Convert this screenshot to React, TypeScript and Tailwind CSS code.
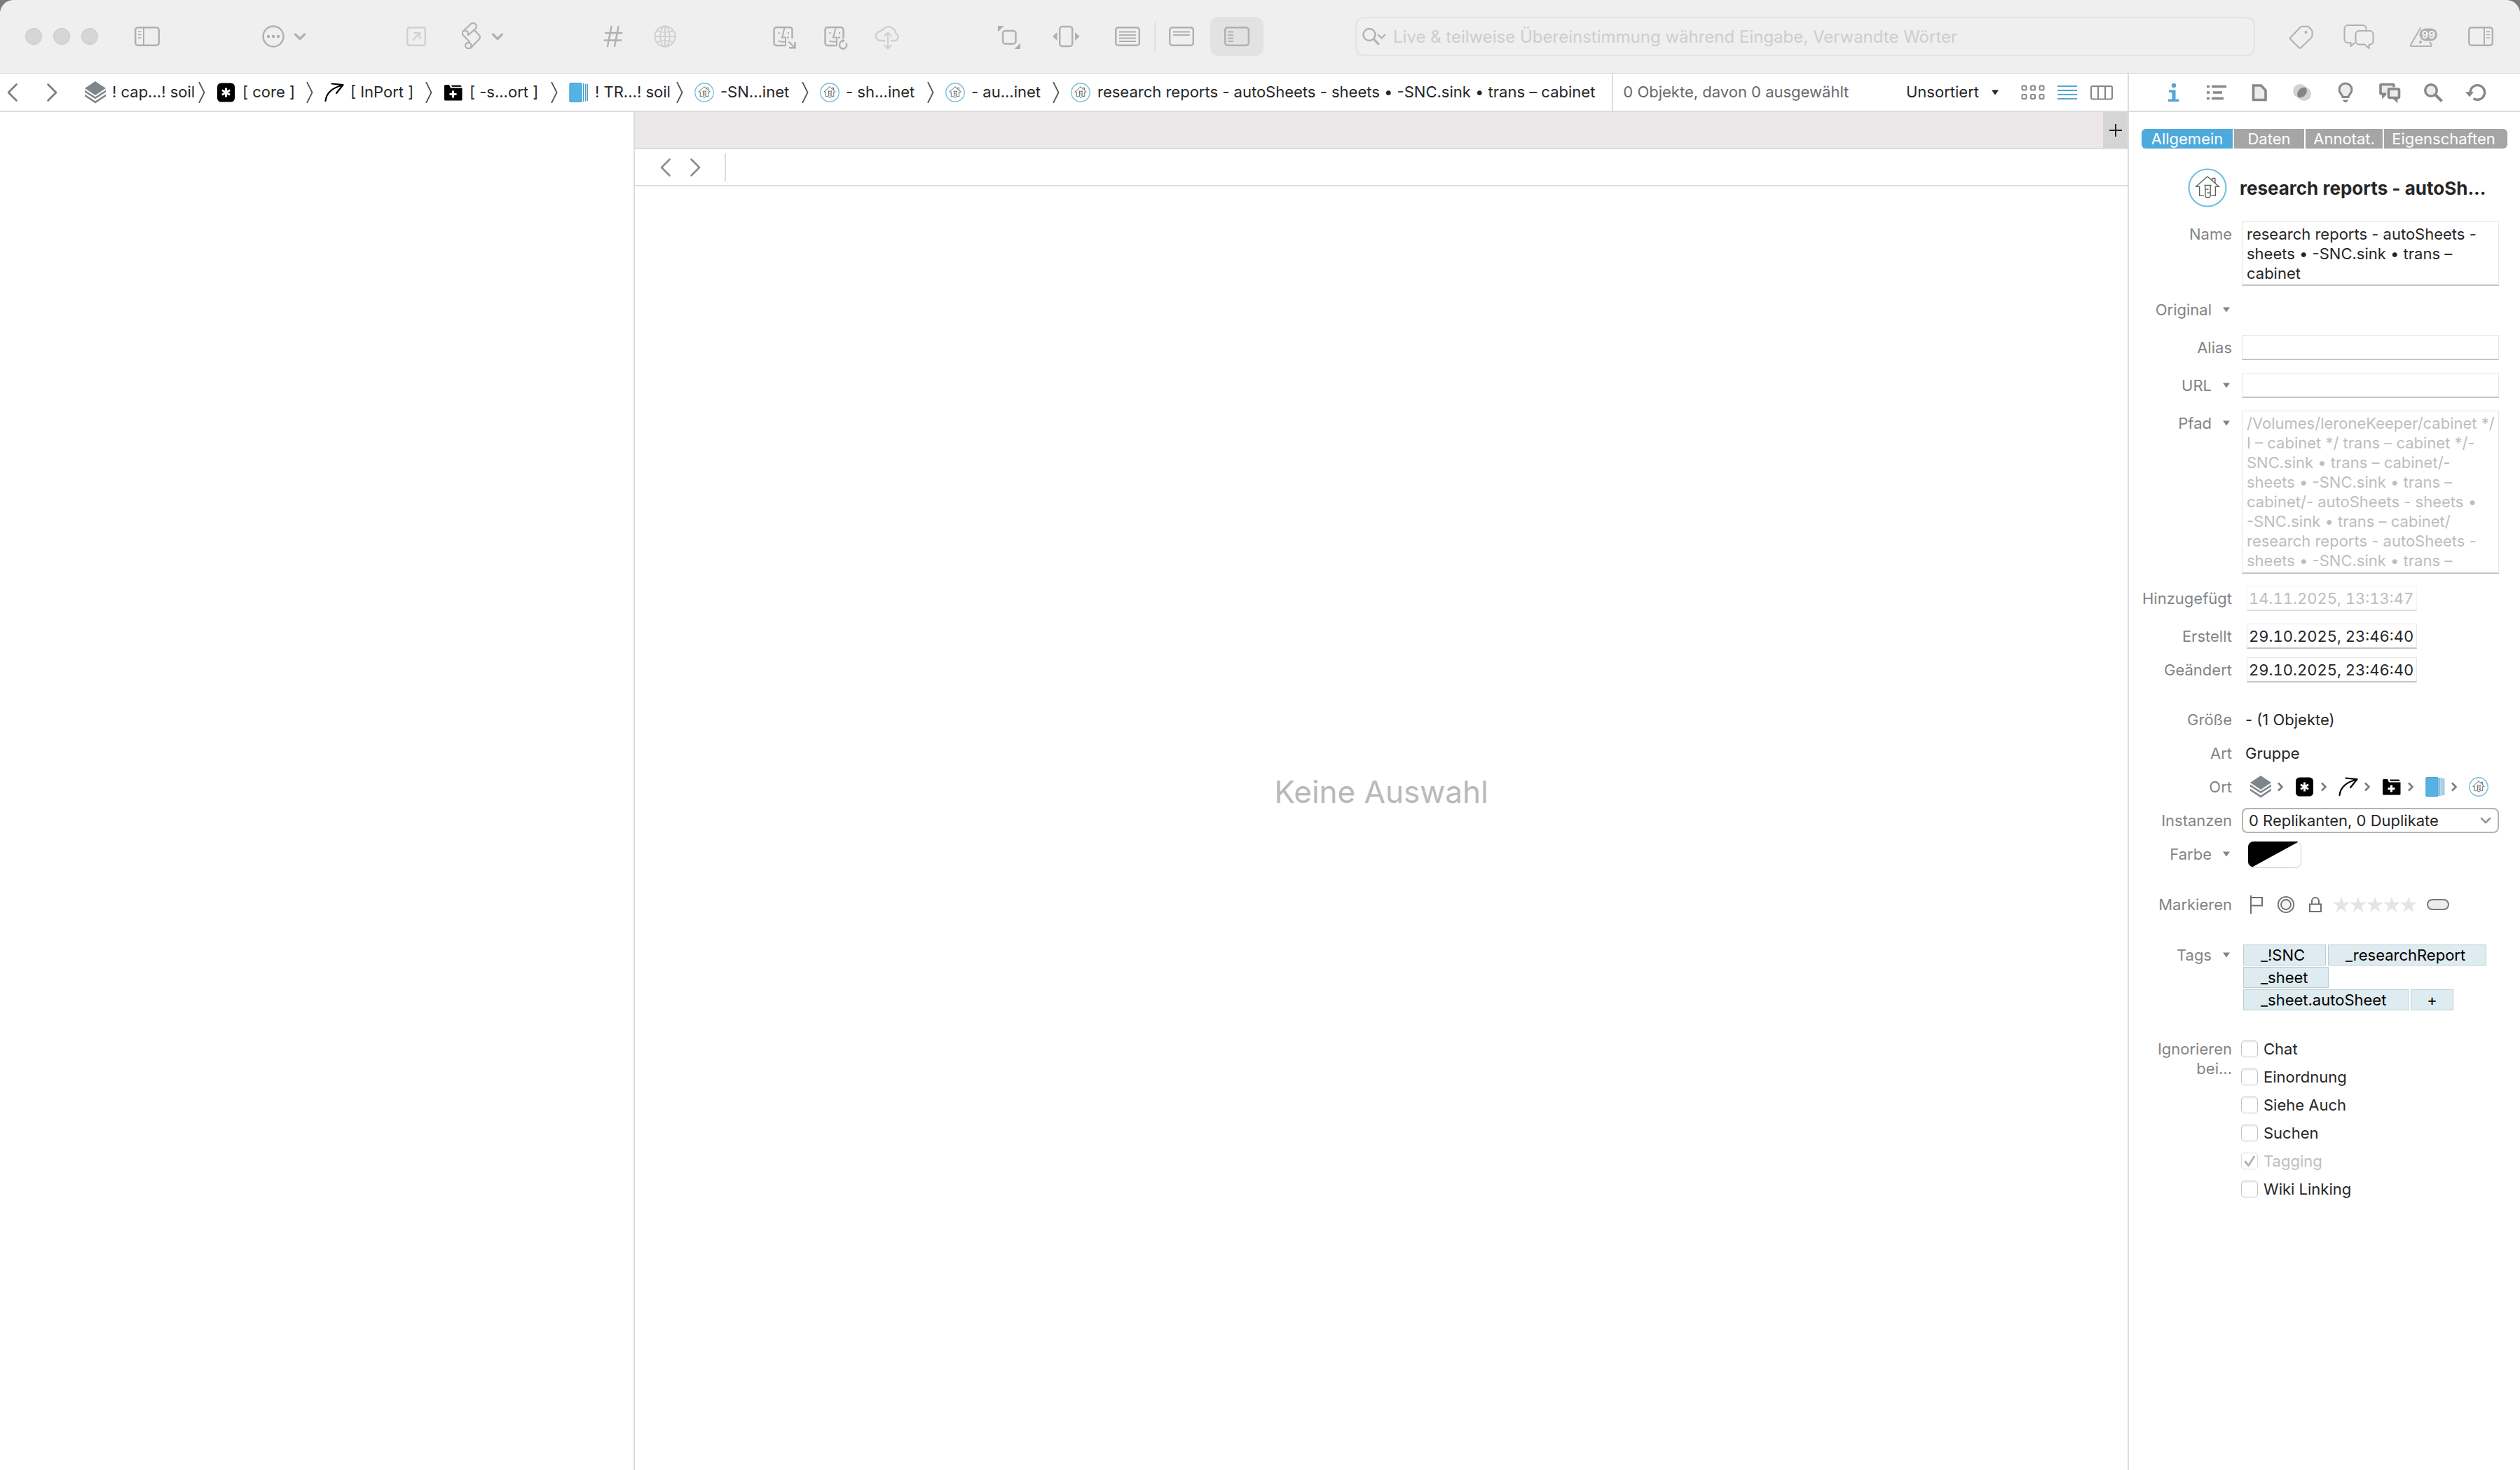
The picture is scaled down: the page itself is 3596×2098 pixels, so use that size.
import React from "react";

type IconProps = { className?: string };

/* ---------- Toolbar icons (40 x 40 grid) ---------- */

const toolSvg = "h-10 w-10 shrink-0 block";

function Tool({ children, className = "" }: { children: React.ReactNode; className?: string }) {
  return (
    <svg
      viewBox="0 0 40 40"
      className={`${toolSvg} ${className}`}
      fill="none"
      stroke="currentColor"
      strokeWidth="2.4"
      strokeLinecap="round"
      strokeLinejoin="round"
      aria-hidden="true"
    >
      {children}
    </svg>
  );
}

const SidebarLeftIcon = () => (
  <Tool>
    <rect x="3.2" y="7.2" width="33.6" height="25.6" rx="3.5" />
    <path d="M15 7.5v25" strokeWidth="2" />
    <path d="M7.5 13h3.5M7.5 17.500h3.500M7.500 22h3.500" strokeWidth="1.6" />
  </Tool>
);

const SidebarRightIcon = () => (
  <Tool>
    <rect x="3.2" y="7.2" width="33.6" height="25.6" rx="3.5" />
    <path d="M25 7.500v25" strokeWidth="2" />
    <path d="M28.500 13h4M28.500 17.500h4M28.500 22h4" strokeWidth="1.600" />
  </Tool>
);

const MoreIcon = () => (
  <Tool>
    <circle cx="20" cy="20" r="14.500" />
    <circle cx="13" cy="20" r="2.200" fill="currentColor" stroke="none" />
    <circle cx="20" cy="20" r="2.200" fill="currentColor" stroke="none" />
    <circle cx="27" cy="20" r="2.200" fill="currentColor" stroke="none" />
  </Tool>
);

const ExportIcon = () => (
  <Tool>
    <rect x="7.200" y="7.200" width="25.600" height="25.600" rx="3" />
    <path d="M15 25.500 25 15M16.500 15H25v8.500" strokeWidth="2.200" strokeLinecap="butt" strokeLinejoin="miter" />
  </Tool>
);

const ScriptIcon = () => (
  <Tool>
    <g strokeWidth="2.200">
      <path d="M9.200 12.300 19.500 2.500a4.600 4.600 0 0 1 7 0a4.600 4.600 0 0 1 0 6.500L15.700 18.300V15a3 3 0 0 0-3-3h-3" />
      <path d="M9.200 12.300a4.500 4.500 0 0 0 0 6.200L17.300 27v2.500" />
      <path d="m24.700 11 7 7a4.200 4.200 0 0 1 0 6L19.700 36.500" />
      <circle cx="16.300" cy="33" r="4.200" />
    </g>
  </Tool>
);

const HashIcon = () => (
  <Tool>
    <path d="M17.500 6 12 34M27.500 6 22 34M9 15h23.500M7.500 25.500H31" />
  </Tool>
);

const GlobeIcon = () => (
  <Tool>
    <g strokeWidth="1.900">
      <circle cx="20" cy="20" r="14.500" />
      <ellipse cx="20" cy="20" rx="6.800" ry="14.500" />
      <path d="M20 5.500v29M5.500 20h29M8.500 11.500c7 3.500 16 3.500 23 0M8.500 28.500c7-3.500 16-3.500 23 0" />
    </g>
  </Tool>
);

const FinderFace = () => (
  <g strokeLinecap="butt" strokeLinejoin="miter">
    <path d="M21 33H8a3.500 3.500 0 0 1-3.500-3.500v-19A3.500 3.500 0 0 1 8 7h19a3.500 3.500 0 0 1 3.500 3.500V23" />
    <path d="M19.500 8 16 21.500h5V33M26 21.500h-3M10.500 26.500c3 1 6 1.300 10 1.300" strokeWidth="2" />
    <path d="M11.500 14v2.500M25 14v2.500" strokeWidth="2" />
  </g>
);

const FinderOutIcon = () => (
  <Tool>
    <FinderFace />
    <path d="m25.500 27.500 8.500 8.500M34.500 28v8.200H26" strokeLinecap="butt" strokeLinejoin="miter" />
  </Tool>
);

const FinderSyncIcon = () => (
  <Tool>
    <FinderFace />
    <path d="M25.500 30.500a5 5 0 1 0 8.500-1M30 26a5 5 0 0 0-4.500 4.500" strokeWidth="2.200" strokeLinecap="butt" />
    <path d="m29 23.500 4 2.800-4 2.800z" fill="currentColor" stroke="none" />
  </Tool>
);

const CloudIcon = () => (
  <Tool>
    <path d="M15.500 26H10a6.500 6.500 0 0 1-1.200-13 6 6 0 0 1 4-2.500A10 10 0 0 1 31 15.500a5.500 5.500 0 0 1-.5 10.500H25" />
    <path d="M20 15v22M15 19.500l5-5 5 5M15 32.500l5 5 5-5" strokeWidth="2" />
  </Tool>
);

const ScaleIcon = () => (
  <Tool>
    <rect x="11" y="12" width="18.500" height="18.500" rx="3.500" />
    <path d="M4 5h8.500L4 13.500zM36 38h-8.500L36 29.500z" fill="currentColor" stroke="none" />
  </Tool>
);

const WidthIcon = () => (
  <Tool>
    <rect x="11.200" y="6" width="18" height="28" rx="3.500" />
    <path d="M7.500 14v12L1 20zM33 14v12l6.500-6z" fill="currentColor" stroke="none" />
  </Tool>
);

const ListBoxIcon = () => (
  <Tool>
    <rect x="3.200" y="7.200" width="33.600" height="25.600" rx="3.500" />
    <path d="M8 13.500h24M8 18h24M8 22.500h24M8 27h24" strokeWidth="2" strokeLinecap="butt" />
  </Tool>
);

const TopBoxIcon = () => (
  <Tool>
    <rect x="3.200" y="7.200" width="33.600" height="25.600" rx="3.500" />
    <path d="M8 13.500h24M8 18h24" strokeWidth="2" strokeLinecap="butt" />
  </Tool>
);

const SideBoxIcon = () => (
  <Tool>
    <rect x="3.200" y="7.200" width="33.600" height="25.600" rx="3.500" />
    <path d="M7.500 13.500H15M7.500 18H15M7.500 22.500H15M7.500 27H15" strokeWidth="2" strokeLinecap="butt" />
  </Tool>
);

const TagIcon = () => (
  <Tool>
    <path d="m4.500 21.500 14-14.500a4 4 0 0 1 2.500-1.300h7.500a3 3 0 0 1 2.200.8l4 4.500a3 3 0 0 1 .8 2.200V19a4 4 0 0 1-1.200 2.600L19.500 36a2 2 0 0 1-3 0l-12-12a1.800 1.800 0 0 1 0-2.500Z" strokeWidth="2" />
    <circle cx="26.500" cy="14" r="2" fill="currentColor" stroke="none" />
  </Tool>
);

const ChatsIcon = () => (
  <svg viewBox="0 0 44 40" className="block h-10 w-11 shrink-0" fill="none" stroke="currentColor" strokeWidth="2" strokeLinejoin="round" strokeLinecap="round" aria-hidden="true">
    <path d="M15.500 29.500 10.500 34v-5H6.500A5 5 0 0 1 1.500 24V9a5 5 0 0 1 5-5h21a5 5 0 0 1 5 5v1.500" />
    <path d="M22.500 12h15a5 5 0 0 1 5 5v9.500a5 5 0 0 1-5 5h-1V37l-6-5.500h-8a5 5 0 0 1-5-5V17a5 5 0 0 1 5-5Z" />
  </svg>
);

const AlertIcon = () => (
  <svg viewBox="0 0 42 40" className="block h-10 w-[42px] shrink-0" fill="none" stroke="currentColor" strokeWidth="2" strokeLinejoin="round" strokeLinecap="round" aria-hidden="true">
    <path d="m16 8-14 24a1.300 1.300 0 0 0 1 2h27.500a1.300 1.300 0 0 0 1-2l-2-4" />
    <circle cx="16" cy="28" r="2" fill="currentColor" stroke="none" />
    <rect x="13" y="7" width="28.500" height="21" rx="10.500" fill="#efefef" stroke="none" />
    <rect x="14.500" y="8.500" width="25.500" height="18" rx="9" fill="currentColor" stroke="none" />
    <text x="27.300" y="23" textAnchor="middle" fontSize="15" fontWeight="700" fill="#f4f4f4" stroke="none" fontFamily="Inter, sans-serif">
      99
    </text>
  </svg>
);

const ChevronDown = ({ className = "" }: IconProps) => (
  <svg viewBox="0 0 20 20" className={`block h-5 w-5 shrink-0 ${className}`} fill="none" stroke="currentColor" strokeWidth="3.200" strokeLinecap="round" strokeLinejoin="round" aria-hidden="true">
    <path d="m3.500 7 6.500 6.500L16.500 7" />
  </svg>
);

const NavChevron = ({ dir, className = "" }: { dir: "left" | "right"; className?: string }) => (
  <svg viewBox="0 0 20 30" className={`block h-[30px] w-5 shrink-0 ${className}`} fill="none" stroke="currentColor" strokeWidth="2.600" strokeLinecap="round" strokeLinejoin="round" aria-hidden="true">
    <path d={dir === "left" ? "M15.500 3.500 4 15l11.500 11.500" : "M4.500 3.500 16 15 4.500 26.500"} />
  </svg>
);

const Caret = ({ className = "" }: IconProps) => (
  <svg viewBox="0 0 10 8" className={`block h-2 w-2.5 shrink-0 ${className}`} fill="currentColor" aria-hidden="true">
    <path d="M0 .5h10L5 7.500z" />
  </svg>
);

/* ---------- Database item icons ---------- */

const LayersIcon = () => (
  <svg viewBox="0 0 30 32" className="block h-8 w-[30px] shrink-0" fill="#7f8689" aria-hidden="true">
    <path d="M15 0 30 10 15 20 0 10z" />
    <path d="M0 12.500 15 22.300 30 12.500v3L15 25.300 0 15.500z" />
    <path d="M0 18.500 15 28.300 30 18.500v3L15 31.500 0 21.500z" />
  </svg>
);

const CoreIcon = () => (
  <svg viewBox="0 0 28 28" className="block h-7 w-7 shrink-0" aria-hidden="true">
    <rect x="1" y="0.500" width="25" height="27" rx="5.500" fill="#000" />
    <path d="M13.500 7.500v13M7.900 10.750l11.200 6.500M19.100 10.750l-11.200 6.500" stroke="#fff" strokeWidth="2.800" />
  </svg>
);

const ArrowIcon = () => (
  <svg viewBox="0 0 28 28" className="block h-7 w-7 shrink-0" fill="none" stroke="#000" strokeWidth="2.200" strokeLinecap="round" strokeLinejoin="round" aria-hidden="true">
    <path d="M1.500 26C2.500 17 9 7.500 26.500 3.500M10.500 1.500 26.500 3.200 17 15" />
  </svg>
);

const FolderIcon = () => (
  <svg viewBox="0 0 28 28" className="block h-7 w-7 shrink-0" aria-hidden="true">
    <path d="M1 4.500A1.500 1.500 0 0 1 2.500 3H8l2 4.500h16.500V24a1.500 1.500 0 0 1-1.500 1.500H2.500A1.500 1.500 0 0 1 1 24z" fill="#000" />
    <path d="M11 3.500h13.500l1 2.500H12z" fill="#222" />
    <path d="M13.500 11.500v10M8.500 16.500h10" stroke="#fff" strokeWidth="3" />
  </svg>
);

const StackIcon = () => (
  <svg viewBox="0 0 28 28" className="block h-7 w-7 shrink-0" aria-hidden="true">
    <rect x="0.500" y="0" width="18" height="28" rx="2" fill="#57b2e4" />
    <rect x="0.800" y="0.300" width="17.400" height="27.400" rx="1.800" fill="none" stroke="#3f8fc0" strokeWidth="0.600" />
    <path d="M20.700 1v26M23.700 1.500v25M26.400 2v24" stroke="#4a9ccc" strokeWidth="1.400" />
  </svg>
);

const HouseIcon = ({ large = false }: { large?: boolean }) => (
  <svg viewBox="0 0 54 54" className={large ? "block h-14 w-14 shrink-0" : "block h-7 w-7 shrink-0"} fill="none" aria-hidden="true">
    <circle cx="27" cy="27" r="25.500" fill="#fdfefe" stroke="#6fbfde" strokeWidth={large ? 2 : 2.600} />
    <g stroke="#5c5c5c" strokeWidth={large ? 1.300 : 1.700} strokeLinejoin="round" strokeLinecap="round">
      <path d="M33.500 16.500V14h4v6.500" />
      <path d="M27 11.500 11 25.500h5V38h5.500M27 11.500l16 14h-5V38h-5.500" />
      <path d="M23 23.500h9M24 23.500v14.500a3.600 3.600 0 0 0 7 0V23.500M24 29h4M27 34h4" />
    </g>
  </svg>
);

/* ---------- Inspector tab icons (32 x 32 grid) ---------- */

function Insp({ children }: { children: React.ReactNode }) {
  return (
    <svg viewBox="0 0 32 32" className="block h-8 w-8" fill="none" stroke="currentColor" aria-hidden="true">
      {children}
    </svg>
  );
}

const inspectorTabs: { name: string; icon: React.ReactNode; active?: boolean }[] = [
  {
    name: "Info",
    active: true,
    icon: (
      <Insp>
        <circle cx="17" cy="6" r="3.200" fill="currentColor" stroke="none" />
        <path d="M10 12.500h9.500v13H24V29H9v-3.500h5.500V16H10z" fill="currentColor" stroke="none" />
      </Insp>
    ),
  },
  {
    name: "Inhalt",
    icon: (
      <Insp>
        <path d="M2 7.500h4M2 16h4M2 24.500h4M9 7.500h21M11 16h13M9 24.500h17" strokeWidth="3.500" />
      </Insp>
    ),
  },
  {
    name: "Dokument",
    icon: (
      <Insp>
        <path d="M7.500 6h11l6.500 7v13.500H7.500z" strokeWidth="3.600" fill="#ececec" />
      </Insp>
    ),
  },
  {
    name: "Schnittmenge",
    icon: (
      <Insp>
        <circle cx="12" cy="14" r="10" fill="#d2d2d2" stroke="none" />
        <circle cx="18" cy="18" r="10" fill="#d2d2d2" stroke="none" />
        <path d="M20.700 9A10 10 0 0 1 9.300 23 10 10 0 0 1 20.700 9Z" fill="#858585" stroke="none" />
      </Insp>
    ),
  },
  {
    name: "Siehe auch",
    icon: (
      <Insp>
        <path d="M11 22.500c0-3.500-5-5-5-10.500a9 9 0 0 1 18 0c0 5.500-5 7-5 10.500z" strokeWidth="3" fill="#ececec" />
        <path d="M10.500 26.500h9L16.500 30h-3z" fill="currentColor" stroke="none" />
      </Insp>
    ),
  },
  {
    name: "Chat",
    icon: (
      <Insp>
        <path d="M3 6h17v12H3z" fill="#ececec" stroke="none" />
        <path d="M22 8.500V6a1.500 1.500 0 0 0-1.500-1.500h-16A1.500 1.500 0 0 0 3 6v10.500A1.500 1.500 0 0 0 4.500 18H11" strokeWidth="3.600" />
        <path d="M5 18v7.500l6.500-6.500V18z" fill="currentColor" stroke="none" />
        <rect x="14.500" y="11" width="15" height="12.500" rx="1.500" strokeWidth="3.600" fill="#ececec" />
        <path d="M20 24.500h7.500V31z" fill="currentColor" stroke="none" />
      </Insp>
    ),
  },
  {
    name: "Suchen",
    icon: (
      <Insp>
        <circle cx="14" cy="13" r="8.300" strokeWidth="3.400" fill="#ececec" />
        <path d="m20.500 19.500 9 9" strokeWidth="4" />
      </Insp>
    ),
  },
  {
    name: "Versionen",
    icon: (
      <Insp>
        <path d="M8 15.500a10.300 10.300 0 1 1 4.500 9" strokeWidth="3.400" />
        <path d="M1 15h12l-6 7.500z" fill="currentColor" stroke="none" />
      </Insp>
    ),
  },
];

/* ---------- Toolbar ---------- */

function TB({ label, className = "", children }: { label: string; className?: string; children: React.ReactNode }) {
  return (
    <button type="button" aria-label={label} title={label} className={`flex shrink-0 items-center ${className}`}>
      {children}
    </button>
  );
}

function Toolbar() {
  return (
    <header className="flex h-[105px] items-center border-b border-b-[#d4d4d4] bg-[#efefef] pr-9 pl-9 text-[#b0b0b0]">
      <div className="flex gap-4">
        {["Schließen", "Minimieren", "Vergrößern"].map((n) => (
          <button key={n} type="button" aria-label={n} className="h-6 w-6 rounded-full border border-[#c6c6c6] bg-[#d6d6d6]" />
        ))}
      </div>
      <TB label="Seitenleiste" className="ml-[50px]"><SidebarLeftIcon /></TB>
      <TB label="Aktionen" className="ml-[140px] gap-2"><MoreIcon /><ChevronDown /></TB>
      <TB label="Exportieren" className="ml-[136px] text-[#d0d0d0]"><ExportIcon /></TB>
      <TB label="Skripte" className="ml-[38px] gap-2"><ScriptIcon /><ChevronDown /></TB>
      <TB label="Tags" className="ml-[135px]"><HashIcon /></TB>
      <TB label="Web" className="ml-[34px] text-[#d0d0d0]"><GlobeIcon /></TB>
      <TB label="Im Finder zeigen" className="ml-[131px]"><FinderOutIcon /></TB>
      <TB label="Mit Finder abgleichen" className="ml-[33px]"><FinderSyncIcon /></TB>
      <TB label="Synchronisieren" className="ml-[34px] text-[#d0d0d0]"><CloudIcon /></TB>
      <TB label="Skalieren" className="ml-[133px]"><ScaleIcon /></TB>
      <TB label="Breite anpassen" className="ml-[41px]"><WidthIcon /></TB>
      <TB label="Liste" className="ml-[48px]"><ListBoxIcon /></TB>
      <div className="mr-[17px] ml-[18px] h-10 w-0.5 shrink-0 bg-[#e0e0e0]" />
      <TB label="Standardansicht" className=""><TopBoxIcon /></TB>
      <TB label="Breitbildansicht" className="ml-[21px] h-14 w-[76px] justify-center rounded-[12px] bg-[#e2e2e2]"><SideBoxIcon /></TB>
      <div className="ml-[131px] flex h-14 min-w-0 flex-1 items-center rounded-[12px] border-2 border-[#e3e3e3] pl-2">
        <button type="button" aria-label="Suchoptionen" className="shrink-0">
          <svg viewBox="0 0 36 28" className="block h-7 w-9" fill="none" stroke="currentColor" strokeWidth="2.400" strokeLinecap="round" strokeLinejoin="round" aria-hidden="true">
            <circle cx="10" cy="11.500" r="8.500" />
            <path d="m16.500 18 6.500 7" strokeWidth="3" />
            <path d="m23 12 4.500 4.500L32 12" />
          </svg>
        </button>
        <input
          type="search"
          aria-label="Suchen"
          placeholder="Live &amp; teilweise Übereinstimmung während Eingabe, Verwandte Wörter"
          className="ml-2 h-full min-w-0 flex-1 bg-transparent text-2xl text-[#555] outline-none placeholder:text-[#cdcdcd]"
        />
      </div>
      <TB label="Tag" className="ml-[46px]"><TagIcon /></TB>
      <TB label="Chat" className="ml-[40px]"><ChatsIcon /></TB>
      <TB label="Hinweise" className="ml-[50px]"><AlertIcon /></TB>
      <TB label="Inspektor" className="ml-[40px]"><SidebarRightIcon /></TB>
    </header>
  );
}

/* ---------- Path bar ---------- */

const crumbs: { icon: React.ReactNode; text: string; width: string }[] = [
  { icon: <LayersIcon />, text: "! cap...! soil", width: "w-[172px]" },
  { icon: <CoreIcon />, text: "[ core ]", width: "w-[138px]" },
  { icon: <ArrowIcon />, text: "[ InPort ]", width: "w-[154px]" },
  { icon: <FolderIcon />, text: "[ -s...ort ]", width: "w-[163px]" },
  { icon: <StackIcon />, text: "! TR...! soil", width: "w-[163px]" },
  { icon: <HouseIcon />, text: "-SN...inet", width: "w-[163px]" },
  { icon: <HouseIcon />, text: "- sh...inet", width: "w-[163px]" },
  { icon: <HouseIcon />, text: "- au...inet", width: "w-[163px]" },
];

function PathBar() {
  return (
    <div className="flex h-[55px] min-w-0 flex-1 items-center border-b-2 border-[#dcdcdc] text-[22px]">
      <button type="button" aria-label="Zurück" className="ml-2 text-[#7c7c7c]"><NavChevron dir="left" /></button>
      <button type="button" aria-label="Vorwärts" className="ml-9 text-[#7c7c7c]"><NavChevron dir="right" /></button>
      <nav aria-label="Pfad" className="ml-[37px] flex h-full min-w-0 items-center gap-4 whitespace-nowrap">
        {crumbs.map((c) => (
          <div key={c.text} className={`flex shrink-0 items-center ${c.width}`}>
            <button type="button" className="flex items-center gap-[9px]">
              {c.icon}
              <span>{c.text}</span>
            </button>
            <svg viewBox="0 0 10 30" className="ml-auto block h-[30px] w-2.5 shrink-0" fill="none" stroke="#555" strokeWidth="1.800" aria-hidden="true">
              <path d="m1 0 7.500 15L1 30" />
            </svg>
          </div>
        ))}
        <button type="button" className="flex shrink-0 items-center gap-2.5">
          <HouseIcon />
          <span>research reports - autoSheets - sheets • -SNC.sink • trans – cabinet</span>
        </button>
      </nav>
      <div className="ml-6 flex h-full min-w-0 flex-1 items-center border-l-2 border-[#dcdcdc] pr-5 pl-[14px] whitespace-nowrap">
        <span className="text-[#6a6a6a]">0 Objekte, davon 0 ausgewählt</span>
        <div className="relative ml-auto flex items-center">
          <select aria-label="Sortierung" className="appearance-none bg-transparent pr-7 outline-none">
            <option>Unsortiert</option>
          </select>
          <Caret className="pointer-events-none absolute right-0 text-[#222]" />
        </div>
        <button type="button" aria-label="Symbole" className="ml-8">
          <svg viewBox="0 0 34 24" className="block h-6 w-[34px]" fill="none" stroke="#868686" strokeWidth="2" aria-hidden="true">
            <rect x="1.500" y="2.500" width="6" height="6" rx="1.500" /><rect x="14" y="2.500" width="6" height="6" rx="1.500" /><rect x="26.500" y="2.500" width="6" height="6" rx="1.500" />
            <rect x="1.500" y="15" width="6" height="6" rx="1.500" /><rect x="14" y="15" width="6" height="6" rx="1.500" /><rect x="26.500" y="15" width="6" height="6" rx="1.500" />
          </svg>
        </button>
        <button type="button" aria-label="Liste" className="ml-4">
          <svg viewBox="0 0 32 24" className="block h-6 w-8" stroke="#55a5d4" strokeWidth="2.200" aria-hidden="true">
            <path d="M2 3h28M2 9h28M2 15h28M2 21h28" />
          </svg>
        </button>
        <button type="button" aria-label="Spalten" className="ml-4">
          <svg viewBox="0 0 34 24" className="block h-6 w-[34px]" fill="none" stroke="#868686" strokeWidth="2" aria-hidden="true">
            <rect x="2" y="3" width="30" height="18.500" rx="2" />
            <path d="M12 3v18.500M22 3v18.500" />
          </svg>
        </button>
      </div>
    </div>
  );
}

/* ---------- Inspector ---------- */

function Row({
  label,
  menu = false,
  htmlFor,
  className = "",
  children,
}: {
  label: React.ReactNode;
  menu?: boolean;
  htmlFor?: string;
  className?: string;
  children?: React.ReactNode;
}) {
  return (
    <div className={`flex items-start gap-3.5 ${className}`}>
      <div className="flex w-[147px] shrink-0 items-center justify-end py-1 text-right leading-7 text-[#848484]">
        {menu ? (
          <button type="button" className="flex items-center gap-4 pr-[3px]">
            {label}
            <Caret />
          </button>
        ) : htmlFor ? (
          <label htmlFor={htmlFor}>{label}</label>
        ) : (
          <span>{label}</span>
        )}
      </div>
      <div className="flex min-h-9 min-w-0 flex-1 items-center">{children}</div>
    </div>
  );
}

const field = "border border-[#e6e6e6] border-b-2 border-b-[#c4c4c4] bg-white outline-none";

const nameText = "research reports - autoSheets -\nsheets • -SNC.sink • trans –\ncabinet";
const pathText = [
  "/Volumes/leroneKeeper/cabinet */",
  "I – cabinet */ trans – cabinet */-",
  "SNC.sink • trans – cabinet/-",
  "sheets • -SNC.sink • trans –",
  "cabinet/- autoSheets - sheets •",
  "-SNC.sink • trans – cabinet/",
  "research reports - autoSheets -",
  "sheets • -SNC.sink • trans –",
].join("\n");

const tabs = [
  { name: "Allgemein", cls: "w-[130px] rounded-l-[6px] bg-[#4eaadd]" },
  { name: "Daten", cls: "w-[100px] bg-[#a5a5a5]" },
  { name: "Annotat.", cls: "w-[110px] bg-[#a5a5a5]" },
  { name: "Eigenschaften", cls: "flex-1 rounded-r-[6px] bg-[#a5a5a5] pr-1.5" },
];

const location = [<LayersIcon />, <CoreIcon />, <ArrowIcon />, <FolderIcon />, <StackIcon />, <HouseIcon />];

const tagRows = [["_!SNC", "_researchReport"], ["_sheet"], ["_sheet.autoSheet"]];
const tagWidths: Record<string, string> = {
  "_!SNC": "w-[118px]",
  _researchReport: "w-[226px]",
  _sheet: "w-[122px]",
  "_sheet.autoSheet": "w-[236px]",
};

const ignoreOptions = ["Chat", "Einordnung", "Siehe Auch", "Suchen", "Tagging", "Wiki Linking"];

function Inspector() {
  return (
    <aside className="flex w-[560px] shrink-0 flex-col border-l-2 border-[#dcdcdc] pr-[30px] text-[22px]">
      <div role="tablist" className="mt-6 -mr-3 ml-[18px] flex h-7 gap-0.5 text-white">
        {tabs.map((t, i) => (
          <button key={t.name} role="tab" aria-selected={i === 0} type="button" className={`flex items-center justify-center ${t.cls}`}>
            {t.name}
          </button>
        ))}
      </div>

      <div className="mt-7 ml-[84px] flex items-center gap-[18px]">
        <HouseIcon large />
        <h2 className="min-w-0 flex-1 text-[26px] font-bold whitespace-nowrap">research reports - autoSh...</h2>
      </div>

      <Row label="Name" htmlFor="f-name" className="mt-5">
        <textarea id="f-name" rows={3} defaultValue={nameText} className={`block h-[92px] w-full resize-none overflow-hidden px-1.5 pt-[3px] leading-7 whitespace-pre ${field}`} />
      </Row>
      <Row label="Original" menu className="mt-4" />
      <Row label="Alias" htmlFor="f-alias" className="mt-[18px]">
        <input id="f-alias" className={`h-9 w-full px-1.5 ${field}`} />
      </Row>
      <Row label="URL" menu className="mt-[18px]">
        <input aria-label="URL" className={`h-9 w-full px-1.5 ${field}`} />
      </Row>
      <Row label="Pfad" menu className="mt-[18px]">
        <textarea aria-label="Pfad" readOnly rows={8} defaultValue={pathText} className={`block h-[233px] w-full resize-none overflow-hidden px-1.5 pt-[3px] leading-7 whitespace-pre text-[#bdbdbd] ${field}`} />
      </Row>
      <Row label="Hinzugefügt" htmlFor="f-added" className="mt-[17px]">
        <input id="f-added" disabled defaultValue="14.11.2025, 13:13:47" className="ml-[7px] h-9 w-[243px] border border-b-2 border-[#f4f4f4] border-b-[#dedede] bg-white px-0.5 text-[#bdbdbd] tabular-nums" />
      </Row>
      <Row label="Erstellt" htmlFor="f-created" className="mt-[18px]">
        <input id="f-created" defaultValue="29.10.2025, 23:46:40" className={`ml-[7px] h-9 w-[243px] px-0.5 tabular-nums ${field}`} />
      </Row>
      <Row label="Geändert" htmlFor="f-changed" className="mt-3">
        <input id="f-changed" defaultValue="29.10.2025, 23:46:40" className={`ml-[7px] h-9 w-[243px] px-0.5 tabular-nums ${field}`} />
      </Row>

      <Row label="Größe" className="mt-[35px]"><span className="pl-[5px]">- (1 Objekte)</span></Row>
      <Row label="Art" className="mt-3"><span className="pl-[5px]">Gruppe</span></Row>
      <Row label="Ort" className="mt-3">
        <div className="flex items-center pl-3">
          {location.map((icon, i) => (
            <React.Fragment key={i}>
              {i > 0 && (
                <svg viewBox="0 0 10 16" className="mr-4 ml-2 block h-4 w-2.5 shrink-0" fill="none" stroke="#7c7c7c" strokeWidth="2.600" aria-hidden="true">
                  <path d="m2 2.500 5.500 5.500L2 13.500" />
                </svg>
              )}
              {icon}
            </React.Fragment>
          ))}
        </div>
      </Row>
      <Row label="Instanzen" htmlFor="f-inst" className="mt-3">
        <div className="relative flex w-full items-center">
          <select id="f-inst" className="h-9 w-full appearance-none rounded-[8px] border-2 border-[#b4b4b4] bg-white pl-2 outline-none">
            <option>0 Replikanten, 0 Duplikate</option>
          </select>
          <svg viewBox="0 0 16 10" className="pointer-events-none absolute right-[11px] h-2.5 w-4" fill="none" stroke="#989898" strokeWidth="2.800" strokeLinecap="round" strokeLinejoin="round" aria-hidden="true">
            <path d="m2 2 6 6 6-6" />
          </svg>
        </div>
      </Row>
      <Row label="Farbe" menu className="mt-3">
        <button type="button" aria-label="Farbe" className="ml-[9px]">
          <svg viewBox="0 0 76 38" className="block h-[38px] w-[76px]" aria-hidden="true">
            <rect x="0.500" y="0.500" width="75" height="37" rx="8" fill="#fff" stroke="#c9c9c9" />
            <path d="M8 0h62q2 0 0 1.500L6 36.500Q0 34 0 29V8a8 8 0 0 1 8-8Z" fill="#000" />
          </svg>
        </button>
      </Row>

      <Row label="Markieren" className="mt-[34px]">
        <button type="button" aria-label="Markierung" className="ml-2.5">
          <svg viewBox="0 0 22 28" className="block h-7 w-[22px]" fill="none" stroke="#707070" strokeWidth="2" aria-hidden="true">
            <path d="M3 1v26M3 4h16v11.500H3" />
          </svg>
        </button>
        <button type="button" aria-label="Ungelesen" className="ml-[18px]">
          <svg viewBox="0 0 26 28" className="block h-7 w-[26px]" fill="none" stroke="#707070" strokeWidth="1.800" aria-hidden="true">
            <circle cx="13" cy="14" r="11.200" /><circle cx="13" cy="14" r="7" fill="#f3f3f3" />
          </svg>
        </button>
        <button type="button" aria-label="Schützen" className="ml-[18px]">
          <svg viewBox="0 0 22 28" className="block h-7 w-[22px]" fill="none" stroke="#707070" strokeWidth="2" aria-hidden="true">
            <rect x="3" y="13.500" width="16" height="10.500" /><path d="M6 13.500V9a5 5 0 0 1 10 0v4.500" />
          </svg>
        </button>
        <button type="button" aria-label="Wertung" className="ml-3.5">
          <svg viewBox="0 0 120 28" className="block h-7 w-[120px]" fill="#e4e4e4" aria-hidden="true">
            {[0, 1, 2, 3, 4].map((n) => (
              <path key={n} transform={`translate(${n * 24} 0)`} d="M12 2.500 14.700 11H24l-7.400 5.200L19.500 25 12 19.600 4.500 25l2.900-8.800L0 11h9.300z" />
            ))}
          </svg>
        </button>
        <button type="button" aria-label="Etikett" className="ml-3.5 h-4 w-8 rounded-full border-2 border-[#7a7a7a] bg-[#ececec]" />
      </Row>

      <Row label="Tags" menu className="mt-9">
        <div className="flex flex-col gap-0.5 pt-[3px] pl-0.5 text-black">
          {tagRows.map((row, r) => (
            <div key={r} className="flex gap-[3px]">
              {row.map((t) => (
                <button key={t} type="button" className={`h-[30px] border border-[#bccdd2] bg-[#deebf0] pl-6 text-left leading-7 ${tagWidths[t]}`}>
                  {t}
                </button>
              ))}
              {r === 2 && (
                <button type="button" aria-label="Tag hinzufügen" className="h-[30px] w-[61px] border border-[#bccdd2] bg-[#deebf0] leading-7">+</button>
              )}
            </div>
          ))}
        </div>
      </Row>

      <Row label={<>Ignorieren<br />bei...</>} className="mt-[37px]">
        <div className="-ml-px flex flex-col gap-1">
          {ignoreOptions.map((o) => {
            const locked = o === "Tagging";
            return (
              <label key={o} className={`flex h-9 items-center gap-2 ${locked ? "text-[#bdbdbd]" : ""}`}>
                <span className="relative flex h-6 w-6 items-center justify-center">
                  <input
                    type="checkbox"
                    defaultChecked={locked}
                    disabled={locked}
                    className={`peer h-6 w-6 appearance-none rounded-[5px] border bg-white ${locked ? "border-[#dcdcdc]" : "border-[#c4c4c4] shadow-[inset_0_2px_2px_rgba(0,0,0,0.06)]"}`}
                  />
                  <svg viewBox="0 0 24 24" className="pointer-events-none absolute hidden h-6 w-6 peer-checked:block" fill="none" stroke="#b4b4b4" strokeWidth="3" strokeLinecap="round" strokeLinejoin="round" aria-hidden="true">
                    <path d="m6 13 4.500 5.500L18.500 6" />
                  </svg>
                </span>
                {o}
              </label>
            );
          })}
        </div>
      </Row>
    </aside>
  );
}

/* ---------- App ---------- */

export default function App() {
  return (
    <div className="bg-[#7d7b7e] font-['Inter','Liberation_Sans',sans-serif] text-[#262626]">
      <div className="flex min-h-screen flex-col overflow-hidden rounded-t-[20px] bg-white">
        <Toolbar />
        <div className="flex">
          <PathBar />
          <div role="tablist" aria-label="Inspektor" className="flex h-[55px] w-[560px] shrink-0 items-center justify-between border-b-2 border-l-2 border-[#dcdcdc] px-[47px] text-[#888]">
            {inspectorTabs.map((t) => (
              <button key={t.name} role="tab" type="button" aria-label={t.name} aria-selected={!!t.active} className={t.active ? "text-[#55a5d4]" : ""}>
                {t.icon}
              </button>
            ))}
          </div>
        </div>
        <div className="flex flex-1">
          <section aria-label="Objekte" className="w-[906px] shrink-0 border-r-2 border-[#dcdcdc]" />
          <main className="flex min-w-0 flex-1 flex-col">
            <div className="flex h-[53px] justify-end border-b-2 border-[#dcdcdc] bg-[#ece8e9]">
              <button type="button" aria-label="Neuer Tab" className="flex w-[35px] items-center justify-center bg-[#d5d5d5]">
                <svg viewBox="0 0 20 20" className="block h-5 w-5" stroke="#222" strokeWidth="2" aria-hidden="true">
                  <path d="M10 1v18M1 10h18" />
                </svg>
              </button>
            </div>
            <div className="flex h-[53px] items-center border-b-2 border-[#dcdcdc] text-[#8c8c8c]">
              <button type="button" aria-label="Zurück" className="ml-[34px]"><NavChevron dir="left" /></button>
              <button type="button" aria-label="Vorwärts" className="ml-[22px]"><NavChevron dir="right" /></button>
              <div className="ml-8 h-10 w-0.5 bg-[#dcdcdc]" />
            </div>
            <div className="flex flex-1 items-center justify-center pb-[104px]">
              <p className="text-[44px] text-[#b9b9b9]">Keine Auswahl</p>
            </div>
          </main>
          <Inspector />
        </div>
      </div>
    </div>
  );
}
